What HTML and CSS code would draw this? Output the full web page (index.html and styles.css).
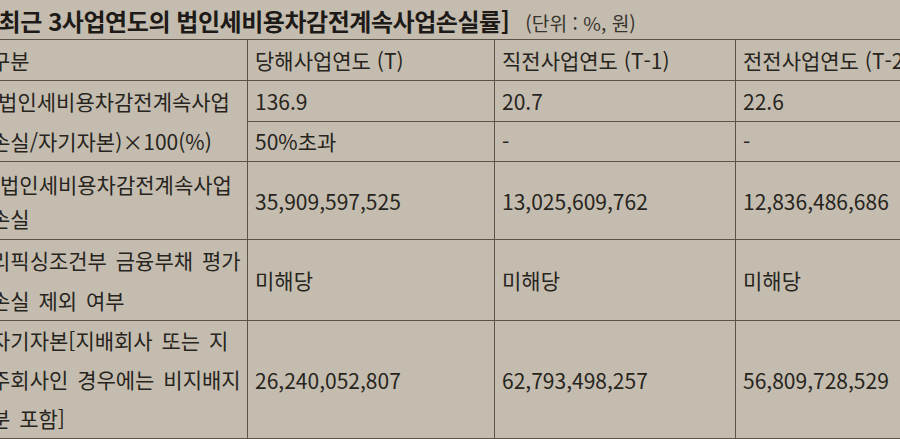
FILE: index.html
```html
<!DOCTYPE html>
<html lang="ko">
<head>
<meta charset="utf-8">
<title>법인세비용차감전계속사업손실률</title>
<link rel="stylesheet" href="styles.css">
</head>
<body>
<div class="page">
  <div class="caption"><strong class="caption-title">[최근 3사업연도의 법인세비용차감전계속사업손실률]</strong><span class="caption-unit">(단위 : %, 원)</span></div>
  <table class="loss-table">
    <colgroup>
      <col class="c-label">
      <col class="c-t0">
      <col class="c-t1">
      <col class="c-t2">
    </colgroup>
    <tr class="r-head">
      <td class="label">구분</td>
      <td>당해사업연도 (T)</td>
      <td>직전사업연도 (T-1)</td>
      <td>전전사업연도 (T-2)</td>
    </tr>
    <tr class="r-single">
      <td class="label" rowspan="2">(법인세비용차감전계속사업<br>손실/자기자본)×100(%)</td>
      <td>136.9</td>
      <td>20.7</td>
      <td>22.6</td>
    </tr>
    <tr class="r-single">
      <td>50%초과</td>
      <td>-</td>
      <td>-</td>
    </tr>
    <tr class="r-loss">
      <td class="label label-tight">법인세비용차감전계속사업<br>손실</td>
      <td>35,909,597,525</td>
      <td>13,025,609,762</td>
      <td>12,836,486,686</td>
    </tr>
    <tr class="r-refix">
      <td class="label">리픽싱조건부 금융부채 평가<br>손실 제외 여부</td>
      <td>미해당</td>
      <td>미해당</td>
      <td>미해당</td>
    </tr>
    <tr class="r-equity">
      <td class="label label-three">자기자본[지배회사 또는 지<br>주회사인 경우에는 비지배지<br>분 포함]</td>
      <td>26,240,052,807</td>
      <td>62,793,498,257</td>
      <td>56,809,728,529</td>
    </tr>
  </table>
</div>
</body>
</html>
```

FILE: styles.css
```css
html, body {
  margin: 0;
  padding: 0;
  background: #c4bdaf;
  overflow: hidden;
}

body {
  font-family: "Noto Sans CJK KR", "Noto Sans", sans-serif;
  color: #272420;
  font-size: 21px;
}

.page {
  margin-left: -17px;
  width: 1200px;
}

.caption {
  height: 39px;
  line-height: 42px;
  padding-left: 7px;
  white-space: nowrap;
}

.caption-title {
  font-weight: 700;
  font-size: 24px;
  letter-spacing: -0.45px;
  color: #1d1a17;
}

.caption-unit {
  font-weight: 400;
  font-size: 19.2px;
  color: #37332e;
  margin-left: 16px;
}

.loss-table {
  border-collapse: collapse;
  table-layout: fixed;
  width: 1012px;
  border-top: 1px solid #5c5448;
  border-bottom: 2px solid #5c5448;
}

.c-label { width: 264px; }
.c-t0 { width: 247px; }
.c-t1 { width: 241px; }
.c-t2 { width: 260px; }

.loss-table td {
  border: 1px solid #5c5448;
  padding: 0 7px;
  vertical-align: middle;
  line-height: 38px;
  white-space: nowrap;
  overflow: hidden;
}

.loss-table td.label {
  line-height: 40px;
  padding-right: 1px;
  word-spacing: 3px;
}

.loss-table td.label-tight {
  line-height: 34px;
  text-indent: 9px;
}

.loss-table td.label-three {
  line-height: 39px;
}

.r-head { height: 41px; }
.r-single { height: 40px; }
.r-loss { height: 78px; }
.r-refix { height: 80px; }
.r-equity { height: 118px; }
```
